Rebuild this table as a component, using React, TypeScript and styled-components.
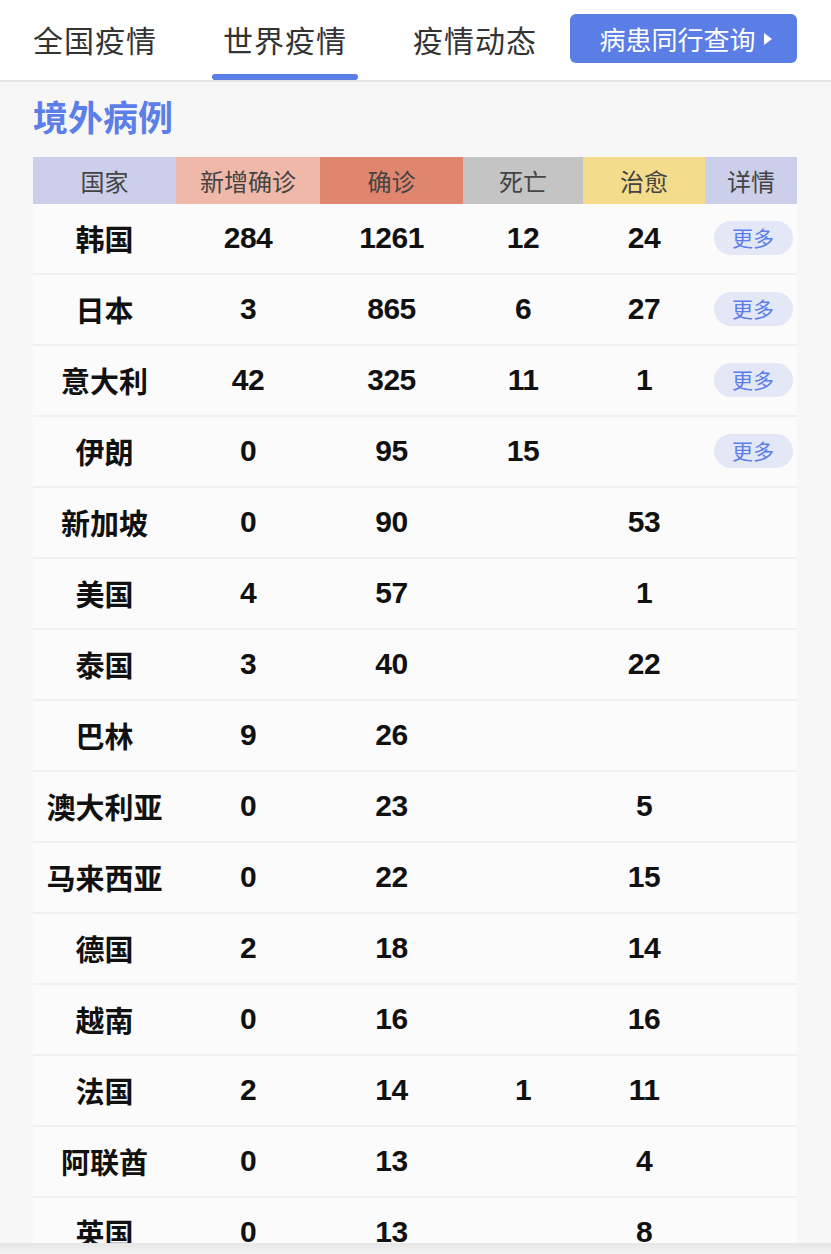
import React from "react";
import styled, { createGlobalStyle } from "styled-components";

const GlobalStyle = createGlobalStyle`
  html, body {
    margin: 0;
    padding: 0;
    height: 100%;
    overflow: hidden;
    background: #f7f7f7;
  }
  body {
    font-family: "Noto Sans CJK SC", "Noto Sans", sans-serif;
  }
`;

const Page = styled.div`
  width: 831px;
  min-height: 1254px;
  background: #f7f7f7;
`;

const Header = styled.header`
  height: 80px;
  background: #ffffff;
  border-bottom: 2px solid #e6e6e6;
  display: flex;
  align-items: center;
  padding: 0 34px 0 33px;
`;

const Tabs = styled.nav`
  display: flex;
  align-items: center;
  gap: 66px;
  height: 100%;
`;

const Tab = styled.div<{ $active?: boolean }>`
  position: relative;
  height: 100%;
  display: flex;
  align-items: center;
  font-size: 30px;
  color: #333333;
  letter-spacing: 1px;
  padding-bottom: 2px;
  box-sizing: border-box;
  &::after {
    content: "";
    display: ${(p) => (p.$active ? "block" : "none")};
    position: absolute;
    left: 50%;
    bottom: 0;
    transform: translateX(-50%);
    width: 146px;
    height: 6px;
    border-radius: 3px;
    background: #5a7de6;
  }
`;

const QueryButton = styled.button`
  margin-left: auto;
  width: 227px;
  height: 49px;
  border: none;
  border-radius: 6px;
  background: #5a7de6;
  color: #ffffff;
  font-family: "Noto Sans CJK SC", sans-serif;
  font-size: 26px;
  display: flex;
  align-items: center;
  justify-content: center;
  gap: 8px;
  padding: 0 0 0 4px;
  margin-top: -3px;
`;

const Triangle = styled.span`
  width: 0;
  height: 0;
  border-top: 6px solid transparent;
  border-bottom: 6px solid transparent;
  border-left: 8px solid #ffffff;
`;

const Content = styled.main`
  padding: 0 34px 0 33px;
`;

const Title = styled.h2`
  margin: 0;
  height: 75px;
  display: flex;
  align-items: center;
  font-size: 35px;
  font-weight: 700;
  color: #5b7ee8;
  padding-bottom: 8px;
  box-sizing: border-box;
`;

const Grid = styled.div`
  display: grid;
  grid-template-columns: 143px 144px 143px 120px 122px 92px;
`;

const HeadCell = styled.div<{ $bg: string }>`
  height: 47px;
  background: ${(p) => p.$bg};
  color: #444444;
  font-size: 24px;
  display: flex;
  align-items: center;
  justify-content: center;
`;

const Row = styled.div`
  display: contents;
`;

const Cell = styled.div<{ $num?: boolean }>`
  height: 67px;
  background: #fbfbfb;
  border-bottom: 2px solid #f0f0f0;
  display: flex;
  align-items: center;
  justify-content: center;
  box-sizing: content-box;
  color: #111111;
  font-weight: 700;
  font-size: ${(p) => (p.$num ? "30px" : "29px")};
  font-family: ${(p) =>
    p.$num
      ? '"Liberation Sans", Arial, sans-serif'
      : '"Noto Sans CJK SC", sans-serif'};
  letter-spacing: ${(p) => (p.$num ? "-0.5px" : "0")};
  padding-top: ${(p) => (p.$num ? "0" : "0")};
  padding-bottom: 2px;
`;

const MoreButton = styled.span`
  width: 79px;
  height: 34px;
  border-radius: 17px;
  background: #e3e7f6;
  color: #5b7ee8;
  font-size: 21px;
  font-weight: 400;
  font-family: "Noto Sans CJK SC", sans-serif;
  display: flex;
  align-items: center;
  justify-content: center;
  margin-left: 4px;
  padding-bottom: 2px;
  box-sizing: border-box;
`;

const BottomShade = styled.div`
  position: fixed;
  left: 0;
  right: 0;
  bottom: 0;
  height: 11px;
  background: linear-gradient(to bottom, #e6e6e6, #f3f3f3);
`;

const headers: { label: string; bg: string }[] = [
  { label: "国家", bg: "#cbcfe9" },
  { label: "新增确诊", bg: "#efb8a8" },
  { label: "确诊", bg: "#e0866f" },
  { label: "死亡", bg: "#c4c4c4" },
  { label: "治愈", bg: "#f3dc8b" },
  { label: "详情", bg: "#cbcfe9" },
];

type R = [string, string, string, string, string, boolean];

const rows: R[] = [
  ["韩国", "284", "1261", "12", "24", true],
  ["日本", "3", "865", "6", "27", true],
  ["意大利", "42", "325", "11", "1", true],
  ["伊朗", "0", "95", "15", "", true],
  ["新加坡", "0", "90", "", "53", false],
  ["美国", "4", "57", "", "1", false],
  ["泰国", "3", "40", "", "22", false],
  ["巴林", "9", "26", "", "", false],
  ["澳大利亚", "0", "23", "", "5", false],
  ["马来西亚", "0", "22", "", "15", false],
  ["德国", "2", "18", "", "14", false],
  ["越南", "0", "16", "", "16", false],
  ["法国", "2", "14", "1", "11", false],
  ["阿联酋", "0", "13", "", "4", false],
  ["英国", "0", "13", "", "8", false],
];

export default function App() {
  return (
    <Page>
      <GlobalStyle />
      <Header>
        <Tabs>
          <Tab>全国疫情</Tab>
          <Tab $active>世界疫情</Tab>
          <Tab>疫情动态</Tab>
        </Tabs>
        <QueryButton>
          病患同行查询
          <Triangle />
        </QueryButton>
      </Header>
      <Content>
        <Title>境外病例</Title>
        <Grid>
          {headers.map((h) => (
            <HeadCell key={h.label} $bg={h.bg}>
              {h.label}
            </HeadCell>
          ))}
          {rows.map((r) => (
            <Row key={r[0]}>
              <Cell>{r[0]}</Cell>
              <Cell $num>{r[1]}</Cell>
              <Cell $num>{r[2]}</Cell>
              <Cell $num>{r[3]}</Cell>
              <Cell $num>{r[4]}</Cell>
              <Cell>{r[5] ? <MoreButton>更多</MoreButton> : null}</Cell>
            </Row>
          ))}
        </Grid>
      </Content>
      <BottomShade />
    </Page>
  );
}
